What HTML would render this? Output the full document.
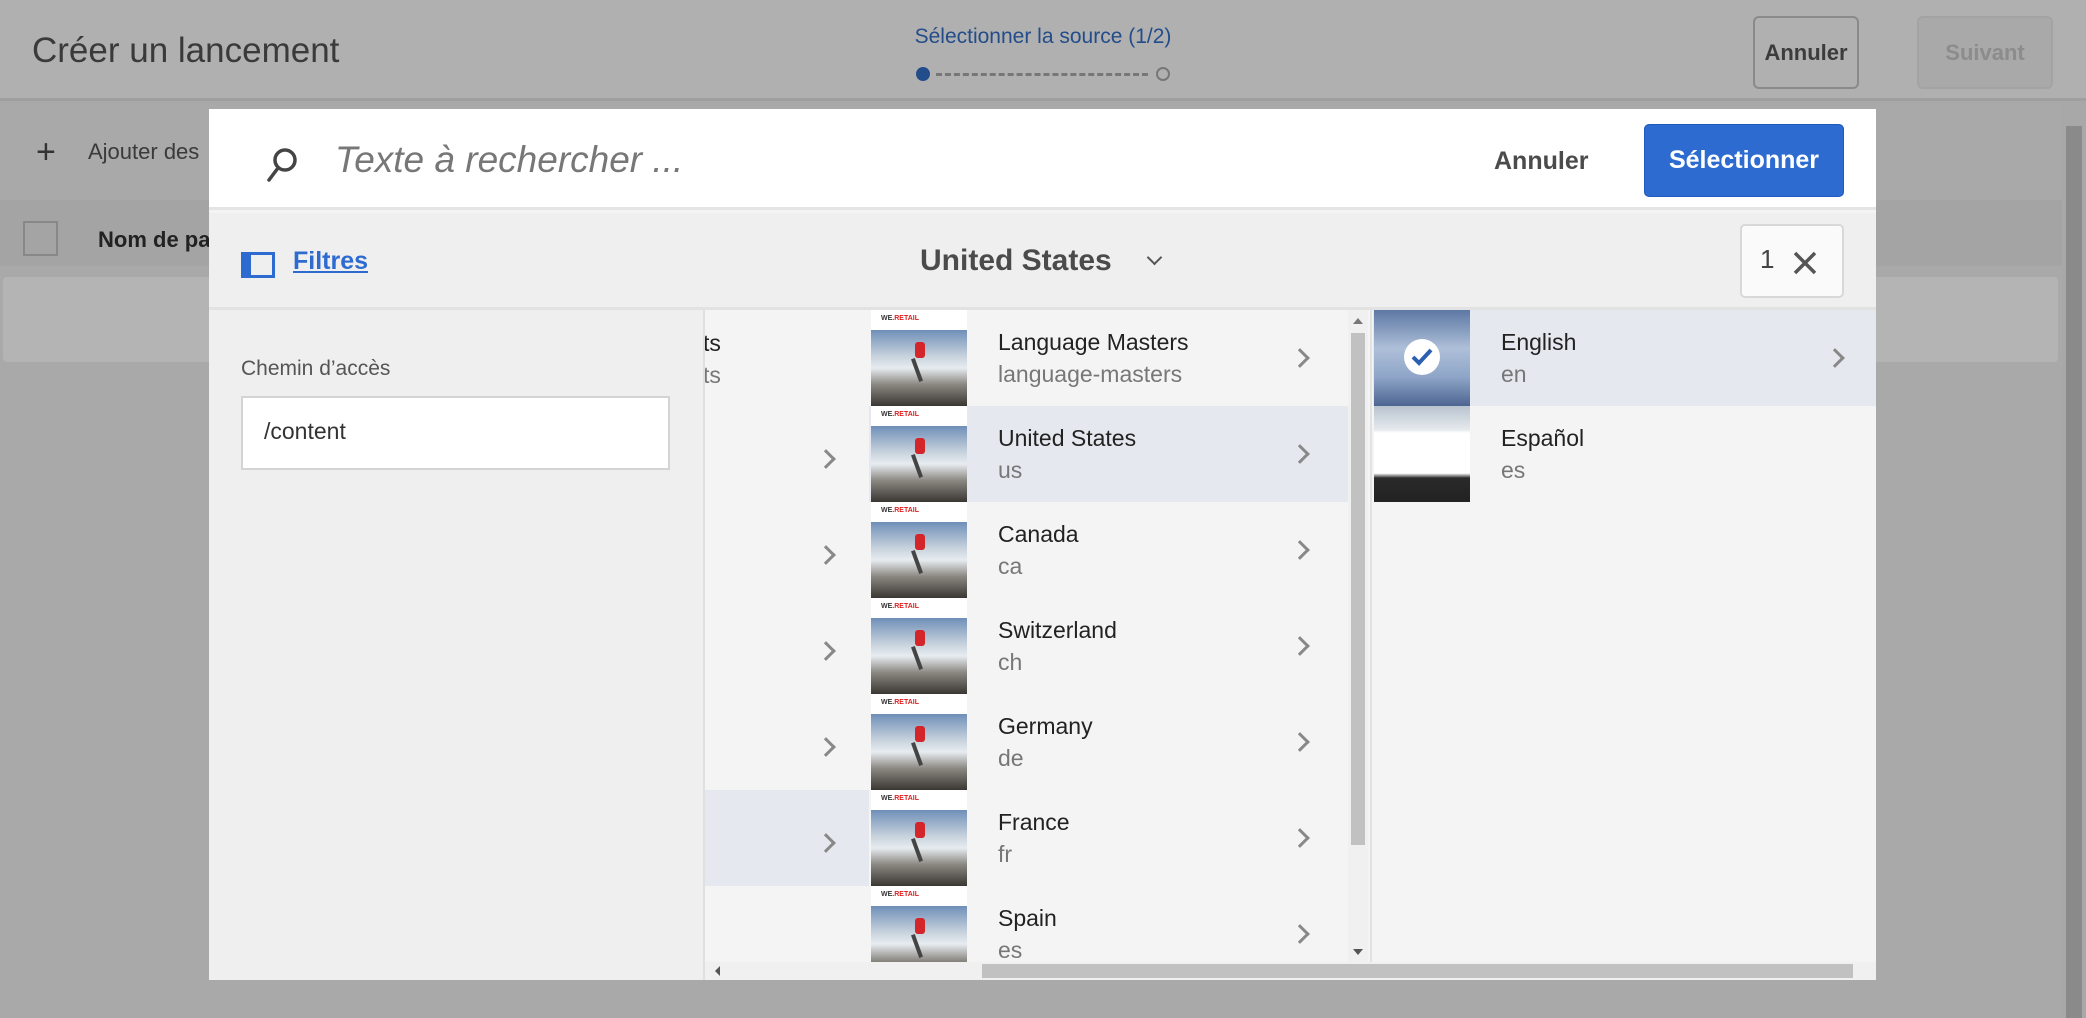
<!DOCTYPE html>
<html><head><meta charset="utf-8"><style>
*{margin:0;padding:0;box-sizing:border-box}
html,body{width:2086px;height:1018px;overflow:hidden}
body{background:#a9a9a9;font-family:"Liberation Sans",sans-serif;position:relative}
.a{position:absolute}
.thumb{position:absolute;width:96px;height:96px;background:#fff;overflow:hidden}
.thumb .lg{position:absolute;left:10px;top:5px;font-size:7px;font-weight:bold;color:#333}
.thumb .lg b{color:#d22}
.thumb .img{position:absolute;left:0;top:20px;width:96px;height:76px;background:linear-gradient(180deg,#6f8fb8 0%,#c9d3dd 35%,#e7ecf0 50%,#8a8680 72%,#3a3733 100%)}
.thumb .p{position:absolute;left:44px;top:32px;width:10px;height:16px;background:#d3252a;border-radius:3px}
.thumb .p2{position:absolute;left:44px;top:48px;width:4px;height:24px;background:#444;transform:rotate(-20deg)}
.t1{position:absolute;font-size:23px;color:#222;white-space:nowrap}
.t2{position:absolute;font-size:23px;color:#777;white-space:nowrap}
.chev{position:absolute;width:14px;height:14px;border-right:3px solid #888;border-top:3px solid #888;transform:rotate(45deg)}
</style></head><body>
<div class="a" style="left:0;top:0;width:2086px;height:101px;background:#b0b0b0;border-bottom:3px solid #9f9f9f"></div>
<div class="a" style="left:32px;top:31px;font-size:35px;color:#3a3a3a">Créer un lancement</div>
<div class="a" style="left:880px;top:25px;width:326px;text-align:center;font-size:21px;color:#234d8a">Sélectionner la source (1/2)</div>
<div class="a" style="left:916px;top:67px;width:14px;height:14px;border-radius:50%;background:#234d8a"></div>
<div class="a" style="left:936px;top:73px;width:212px;border-top:3px dashed #777"></div>
<div class="a" style="left:1156px;top:67px;width:14px;height:14px;border-radius:50%;border:2px solid #777"></div>
<div class="a" style="left:1753px;top:16px;width:106px;height:73px;border:2px solid #8a8a8a;border-radius:6px;font-size:22px;font-weight:bold;color:#3c3c3c;text-align:center;line-height:69px">Annuler</div>
<div class="a" style="left:1917px;top:16px;width:136px;height:73px;border:2px solid #a3a3a3;border-radius:6px;background:#a9a9a9;font-size:22px;font-weight:bold;color:#8c8c8c;text-align:center;line-height:69px">Suivant</div>
<div class="a" style="left:36px;top:137px;font-size:34px;color:#333;line-height:30px">+</div>
<div class="a" style="left:88px;top:139px;font-size:22px;color:#3a3a3a">Ajouter des</div>
<div class="a" style="left:0;top:200px;width:2062px;height:66px;background:#a4a4a4"></div>
<div class="a" style="left:23px;top:221px;width:35px;height:35px;border:2px solid #888"></div>
<div class="a" style="left:98px;top:227px;font-size:22px;font-weight:bold;color:#222">Nom de pa</div>
<div class="a" style="left:3px;top:277px;width:2055px;height:85px;background:#b4b4b4;border-radius:4px"></div>
<div class="a" style="left:2062px;top:101px;width:24px;height:917px;background:#a8a8a8"></div>
<div class="a" style="left:2066px;top:126px;width:16px;height:892px;background:#8a8a8a"></div>
<div class="a" style="left:209px;top:109px;width:1667px;height:871px;background:#f4f4f4;overflow:hidden">
 <div class="a" style="left:0;top:0;width:1667px;height:101px;background:#fff;border-bottom:3px solid #e4e4e4"></div>
 <svg class="a" style="left:56px;top:36px" width="36" height="40" viewBox="0 0 36 40"><circle cx="20" cy="15" r="10" fill="none" stroke="#444" stroke-width="3.5"/><line x1="13" y1="23" x2="4" y2="35" stroke="#444" stroke-width="3.5" stroke-linecap="round"/></svg>
 <div class="a" style="left:126px;top:30px;font-size:37px;font-style:italic;color:#777">Texte à rechercher ...</div>
 <div class="a" style="left:1285px;top:38px;font-size:25px;font-weight:bold;color:#4b4b4b">Annuler</div>
 <div class="a" style="left:1435px;top:15px;width:200px;height:73px;background:#2d6bd0;border:1px solid #1f5bbd;border-radius:5px;color:#fff;font-size:25px;font-weight:bold;text-align:center;line-height:71px">Sélectionner</div>
 <div class="a" style="left:0;top:104px;width:1667px;height:97px;background:#efefef;border-bottom:3px solid #e2e2e2"></div>
 <div class="a" style="left:32px;top:143px;width:34px;height:26px;border:3px solid #2d6bd0;border-left:10px solid #2d6bd0"></div>
 <div class="a" style="left:84px;top:138px;font-size:25px;font-weight:bold;color:#2d6bd0;text-decoration:underline">Filtres</div>
 <div class="a" style="left:711px;top:135px;font-size:30px;font-weight:bold;color:#4b4b4b">United States</div>
 <div class="a" style="left:940px;top:143px;width:11px;height:11px;border-right:2.5px solid #555;border-bottom:2.5px solid #555;transform:rotate(45deg)"></div>
 <div class="a" style="left:1531px;top:115px;width:104px;height:74px;background:#fafafa;border:2px solid #d8d8d8;border-radius:5px"></div>
 <div class="a" style="left:1551px;top:135px;font-size:26px;color:#444">1</div>
 <svg class="a" style="left:1583px;top:141px" width="26" height="26"><path d="M3 3L23 23M23 3L3 23" stroke="#555" stroke-width="3.5"/></svg>
 <div class="a" style="left:0;top:201px;width:496px;height:670px;background:#efefef;border-right:2px solid #e0e0e0"></div>
 <div class="a" style="left:32px;top:248px;font-size:21px;color:#555">Chemin d’accès</div>
 <div class="a" style="left:32px;top:287px;width:429px;height:74px;background:#fff;border:2px solid #d4d4d4;font-size:23px;color:#333;padding:20px 0 0 21px">/content</div>
 <div class="a" style="left:496px;top:201px;width:164px;height:652px;background:#f4f4f4;overflow:hidden">
  <div class="t1" style="left:-2px;top:20px">ts</div>
  <div class="t2" style="left:-2px;top:52px">ts</div>
  <div class="a" style="left:0;top:480px;width:164px;height:96px;background:#e5e9ef"></div>
  <div class="chev" style="left:114px;top:142px"></div>
  <div class="chev" style="left:114px;top:238px"></div>
  <div class="chev" style="left:114px;top:334px"></div>
  <div class="chev" style="left:114px;top:430px"></div>
  <div class="chev" style="left:114px;top:526px"></div>
 </div>
 <div class="a" style="left:660px;top:201px;width:479px;height:652px;overflow:hidden;background:#f4f4f4">
  <div class="a" style="left:0;top:96px;width:479px;height:96px;background:#e5e9ef"></div>
  <div class="thumb" style="left:2px;top:0"><div class="lg">WE.<b>RETAIL</b></div><div class="img"></div><div class="p"></div><div class="p2"></div></div>
  <div class="t1" style="left:129px;top:19px">Language Masters</div><div class="t2" style="left:129px;top:51px">language-masters</div><div class="chev" style="left:424px;top:41px"></div>
  <div class="thumb" style="left:2px;top:96px"><div class="lg">WE.<b>RETAIL</b></div><div class="img"></div><div class="p"></div><div class="p2"></div></div>
  <div class="t1" style="left:129px;top:115px">United States</div><div class="t2" style="left:129px;top:147px">us</div><div class="chev" style="left:424px;top:137px"></div>
  <div class="thumb" style="left:2px;top:192px"><div class="lg">WE.<b>RETAIL</b></div><div class="img"></div><div class="p"></div><div class="p2"></div></div>
  <div class="t1" style="left:129px;top:211px">Canada</div><div class="t2" style="left:129px;top:243px">ca</div><div class="chev" style="left:424px;top:233px"></div>
  <div class="thumb" style="left:2px;top:288px"><div class="lg">WE.<b>RETAIL</b></div><div class="img"></div><div class="p"></div><div class="p2"></div></div>
  <div class="t1" style="left:129px;top:307px">Switzerland</div><div class="t2" style="left:129px;top:339px">ch</div><div class="chev" style="left:424px;top:329px"></div>
  <div class="thumb" style="left:2px;top:384px"><div class="lg">WE.<b>RETAIL</b></div><div class="img"></div><div class="p"></div><div class="p2"></div></div>
  <div class="t1" style="left:129px;top:403px">Germany</div><div class="t2" style="left:129px;top:435px">de</div><div class="chev" style="left:424px;top:425px"></div>
  <div class="thumb" style="left:2px;top:480px"><div class="lg">WE.<b>RETAIL</b></div><div class="img"></div><div class="p"></div><div class="p2"></div></div>
  <div class="t1" style="left:129px;top:499px">France</div><div class="t2" style="left:129px;top:531px">fr</div><div class="chev" style="left:424px;top:521px"></div>
  <div class="thumb" style="left:2px;top:576px"><div class="lg">WE.<b>RETAIL</b></div><div class="img"></div><div class="p"></div><div class="p2"></div></div>
  <div class="t1" style="left:129px;top:595px">Spain</div><div class="t2" style="left:129px;top:627px">es</div><div class="chev" style="left:424px;top:617px"></div>
 </div>
 <div class="a" style="left:1139px;top:201px;width:20px;height:652px;background:#f0f0f0"></div>
 <div class="a" style="left:1142px;top:224px;width:14px;height:512px;background:#c1c1c1"></div>
 <div class="a" style="left:1144px;top:209px;border:5px solid transparent;border-bottom:6px solid #777;border-top:none"></div>
 <div class="a" style="left:1144px;top:840px;border:5px solid transparent;border-top:6px solid #555;border-bottom:none"></div>
 <div class="a" style="left:1161px;top:201px;width:2px;height:652px;background:#e2e2e2"></div>
 <div class="a" style="left:1164px;top:201px;width:503px;height:652px;background:#f4f4f4"></div>
 <div class="a" style="left:1164px;top:201px;width:503px;height:96px;background:#e5e9ef"></div>
 <div class="a" style="left:1165px;top:201px;width:96px;height:96px;background:linear-gradient(180deg,#5c78a4,#aebfd8 40%,#8ea5c8 70%,#4d6591)"></div>
 <div class="a" style="left:1195px;top:230px;width:36px;height:36px;border-radius:50%;background:#fff"></div>
 <svg class="a" style="left:1200px;top:236px" width="26" height="24"><path d="M4 12L10 18L22 5" fill="none" stroke="#2c5fb0" stroke-width="4"/></svg>
 <div class="a" style="left:1165px;top:297px;width:96px;height:96px;background:linear-gradient(180deg,#b9c4cf 0%,#e6eaee 25%,#fff 28%,#fff 70%,#2a2a2a 75%,#222 100%)"></div>
 <div class="t1" style="left:1292px;top:220px">English</div>
 <div class="t2" style="left:1292px;top:252px">en</div>
 <div class="chev" style="left:1619px;top:242px"></div>
 <div class="t1" style="left:1292px;top:316px">Español</div>
 <div class="t2" style="left:1292px;top:348px">es</div>
 <div class="a" style="left:496px;top:853px;width:1171px;height:18px;background:#f0f0f0"></div>
 <div class="a" style="left:773px;top:855px;width:871px;height:14px;background:#c1c1c1"></div>
 <div class="a" style="left:506px;top:857px;border:5px solid transparent;border-right:5px solid #555;border-left:none"></div>
</div>
</body></html>
